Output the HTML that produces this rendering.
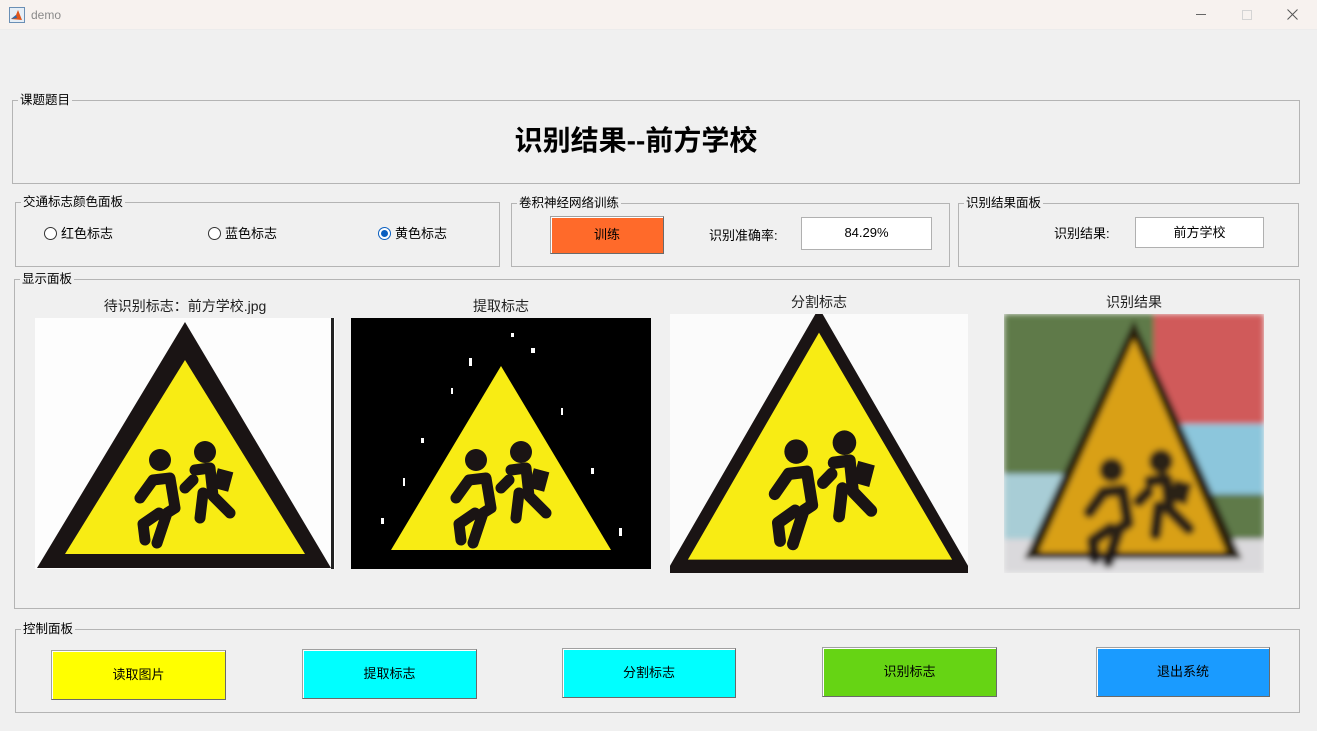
<!DOCTYPE html>
<html><head><meta charset="utf-8"><style>
*{box-sizing:border-box;margin:0;padding:0}
body{width:1317px;height:731px;background:#f0f0f0;position:relative;overflow:hidden;font-family:"Liberation Sans","Noto Sans CJK SC",sans-serif;font-size:13px;color:#000}
.a{position:absolute}
.tb{left:0;top:0;width:1317px;height:30px;background:#f7f2ef;border-bottom:1px solid #ececec}
.fs{position:absolute;border:1px solid #b4b4b4}
.lg{position:absolute;top:-9px;left:5px;background:#f0f0f0;padding:0 2px;font-size:12.5px;line-height:16px}
.btn{position:absolute;border:1px solid #a0a0a0;border-right-color:#6a6a6a;border-bottom-color:#6a6a6a;display:flex;align-items:center;justify-content:center;font-size:13px;box-shadow:inset 1px 1px 0 #fff;padding-bottom:3px}
.box{position:absolute;background:#fff;border:1px solid #b0b0b0;display:flex;align-items:center;justify-content:center;font-size:13px;padding-bottom:2px}
.rd{position:absolute;width:13px;height:13px;border-radius:50%;border:1px solid #333;background:#fff}
.cap{position:absolute;font-size:14px;color:#222;text-align:center}
</style></head><body>
<div class="a tb"></div>
<svg class="a" style="left:9px;top:7px" width="16" height="16" viewBox="0 0 16 16"><rect x="0.5" y="0.5" width="15" height="15" fill="#e6eef6" stroke="#6a8fb5"/><path d="M2 12 L7 8 L9 3 L13 13 Z" fill="#e0561c"/><path d="M2 12 L7 8 L8 11 Z" fill="#2a6bb0"/></svg>
<div class="a" style="left:31px;top:8px;font-size:12px;color:#8a8a8a">demo</div>
<div class="a" style="left:1196px;top:14px;width:10px;height:1px;background:#666"></div>
<div class="a" style="left:1242px;top:10px;width:10px;height:10px;border:1px solid #d4d4d4"></div>
<svg class="a" style="left:1287px;top:9px" width="11" height="11" viewBox="0 0 11 11"><path d="M0.5 0.5 L10.5 10.5 M10.5 0.5 L0.5 10.5" stroke="#555" stroke-width="1"/></svg>

<div class="fs" style="left:12px;top:100px;width:1288px;height:84px"><span class="lg">课题题目</span></div>
<div class="a" style="left:0;width:1272px;top:119px;text-align:center;font-size:28px;font-weight:bold">识别结果--前方学校</div>

<div class="fs" style="left:15px;top:202px;width:485px;height:65px"><span class="lg">交通标志颜色面板</span></div>
<div class="rd" style="left:44px;top:227px"></div><div class="a" style="left:61px;top:223px">红色标志</div>
<div class="rd" style="left:208px;top:227px"></div><div class="a" style="left:225px;top:223px">蓝色标志</div>
<div class="rd" style="left:378px;top:227px;border-color:#0a5fc0"><div style="position:absolute;left:2px;top:2px;width:7px;height:7px;border-radius:50%;background:#0a5fc0"></div></div><div class="a" style="left:395px;top:223px">黄色标志</div>

<div class="fs" style="left:511px;top:203px;width:439px;height:64px"><span class="lg">卷积神经网络训练</span></div>
<div class="btn" style="left:550px;top:216px;width:114px;height:38px;background:#ff6a2a">训练</div>
<div class="a" style="left:709px;top:225px;font-size:13px">识别准确率:</div>
<div class="box" style="left:801px;top:217px;width:131px;height:33px">84.29%</div>

<div class="fs" style="left:958px;top:203px;width:341px;height:64px"><span class="lg">识别结果面板</span></div>
<div class="a" style="left:1054px;top:223px">识别结果:</div>
<div class="box" style="left:1135px;top:217px;width:129px;height:31px">前方学校</div>

<div class="fs" style="left:14px;top:279px;width:1286px;height:330px"><span class="lg">显示面板</span></div>
<div class="cap" style="left:35px;width:300px;top:296px">待识别标志：前方学校.jpg</div>
<div class="cap" style="left:351px;width:300px;top:296px">提取标志</div>
<div class="cap" style="left:670px;width:298px;top:292px">分割标志</div>
<div class="cap" style="left:1004px;width:260px;top:292px">识别结果</div>

<svg width="0" height="0" style="position:absolute"><defs>
<g id="kids" fill="#1a1414" stroke="#1a1414" stroke-linecap="round" stroke-linejoin="round">
<circle cx="125" cy="142" r="11" stroke="none"/><circle cx="170" cy="134" r="11" stroke="none"/>
<path d="M105 180 L118 162 L135 160 L140 190 L132 195 L122 225 M124 195 L108 206 L110 222" fill="none" stroke-width="11"/>
<path d="M160 152 L175 150 L178 178 L195 195 M168 175 L165 200 M158 162 L150 170" fill="none" stroke-width="11"/>
<rect x="180" y="152" width="16" height="20" stroke="none" transform="rotate(15 188 162)"/>
</g></defs></svg>

<svg class="a" style="left:35px;top:318px" width="300" height="251" viewBox="0 0 300 251" preserveAspectRatio="none">
<rect width="300" height="251" fill="#fdfdfd"/><rect x="296" y="0" width="3" height="251" fill="#222"/>
<polygon points="150,4 2,250 296,250" fill="#1a1414"/><polygon points="150,42 30,236 270,236" fill="#f8ec14"/>
<use href="#kids"/></svg>

<svg class="a" style="left:351px;top:318px" width="300" height="251" viewBox="0 0 300 251" preserveAspectRatio="none">
<rect width="300" height="251" fill="#000"/>
<g fill="#fff"><rect x="118" y="40" width="3" height="8"/><rect x="100" y="70" width="2" height="6"/><rect x="70" y="120" width="3" height="5"/><rect x="52" y="160" width="2" height="8"/><rect x="30" y="200" width="3" height="6"/><rect x="180" y="30" width="4" height="5"/><rect x="210" y="90" width="2" height="7"/><rect x="240" y="150" width="3" height="6"/><rect x="268" y="210" width="3" height="8"/><rect x="160" y="15" width="3" height="4"/></g>
<polygon points="150,48 40,232 260,232" fill="#f8ec14"/>
<use href="#kids"/></svg>

<svg class="a" style="left:670px;top:314px" width="298" height="259" viewBox="0 0 300 251" preserveAspectRatio="none">
<rect width="300" height="251" fill="#fbfbfb"/>
<polygon points="150,-6 -6,254 306,254" fill="#1a1414"/><polygon points="150,18 18,238 284,238" fill="#f8ec14"/>
<use href="#kids" transform="translate(-8,-20) scale(1.08)"/></svg>

<svg class="a" style="left:1004px;top:314px" width="260" height="259" viewBox="0 0 260 259" preserveAspectRatio="none">
<defs><filter id="bl"><feGaussianBlur stdDeviation="3"/></filter></defs>
<g filter="url(#bl)">
<rect width="260" height="259" fill="#5e7a4a"/><rect x="150" y="0" width="110" height="110" fill="#d05a5a"/><rect x="170" y="110" width="90" height="70" fill="#8cc6dc"/>
<rect x="0" y="160" width="60" height="99" fill="#a8cdd6"/><rect x="0" y="225" width="260" height="34" fill="#dad9dc"/>
<polygon points="130,6 20,245 238,245" fill="#2a2010"/><polygon points="130,25 35,238 222,238" fill="#d9a016"/>
<use href="#kids" transform="translate(-30,0) scale(1.1)" opacity=".9"/></g></svg>

<div class="fs" style="left:15px;top:629px;width:1285px;height:84px"><span class="lg">控制面板</span></div>
<div class="btn" style="left:51px;top:650px;width:175px;height:50px;background:#ffff00">读取图片</div>
<div class="btn" style="left:302px;top:649px;width:175px;height:50px;background:#00ffff">提取标志</div>
<div class="btn" style="left:562px;top:648px;width:174px;height:50px;background:#00ffff">分割标志</div>
<div class="btn" style="left:822px;top:647px;width:175px;height:50px;background:#66d414">识别标志</div>
<div class="btn" style="left:1096px;top:647px;width:174px;height:50px;background:#1a9bff">退出系统</div>
</body></html>
